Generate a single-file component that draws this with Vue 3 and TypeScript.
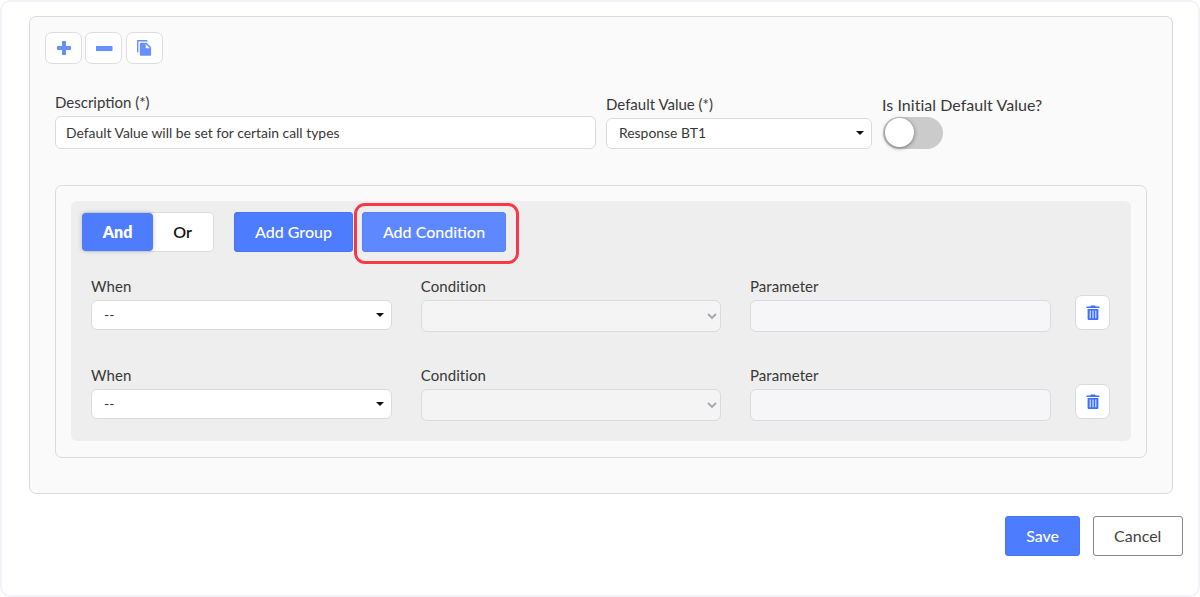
<script setup lang="ts">
import { ref } from 'vue'

interface ConditionRow {
  id: number
  when: string
}

const description = ref('Default Value will be set for certain call types')
const defaultValue = ref('Response BT1')
const isInitial = ref(false)
const operator = ref<'And' | 'Or'>('And')
const rows = ref<ConditionRow[]>([
  { id: 1, when: '--' },
  { id: 2, when: '--' },
])

let nextId = 3
function addCondition(): void {
  rows.value.push({ id: nextId++, when: '--' })
}
function removeRow(id: number): void {
  rows.value = rows.value.filter((row) => row.id !== id)
}
</script>

<template>
  <main class="page">
    <section class="panel">
      <div class="toolbar">
        <button class="tool" aria-label="Add">
          <svg width="16" height="16" viewBox="0 0 16 16"><path d="M6 1h4v5h5v4h-5v5H6v-5H1V6h5z" /></svg>
        </button>
        <button class="tool" aria-label="Remove">
          <svg width="18" height="16" viewBox="0 0 18 16"><rect x="1" y="6" width="16.5" height="5" rx="0.6" /></svg>
        </button>
        <button class="tool" aria-label="Copy">
          <svg width="16" height="18" viewBox="0 0 16 18">
            <path d="M1 1.1h10.4v1.4H2.4v10.7H1z" />
            <path fill-rule="evenodd" d="M5 3.8h5.6l4.5 4.5v7.3a1.2 1.2 0 0 1-1.2 1.2H5a1.2 1.2 0 0 1-1.2-1.2V5A1.2 1.2 0 0 1 5 3.8zm4.7 1.1v4.3h4.2z" />
          </svg>
        </button>
      </div>

      <div class="fields">
        <div class="field description">
          <label>Description (*)</label>
          <div class="control text-input">{{ description }}</div>
        </div>
        <div class="field default-value">
          <label>Default Value (*)</label>
          <div class="control select">
            <span>{{ defaultValue }}</span>
            <i class="caret"></i>
          </div>
        </div>
        <div class="field initial">
          <label>Is Initial Default Value?</label>
          <button class="switch" :class="{ on: isInitial }" aria-label="Is Initial Default Value?" @click="isInitial = !isInitial">
            <i class="knob"></i>
          </button>
        </div>
      </div>

      <div class="builder">
        <div class="group">
          <div class="actions">
            <div class="toggle">
              <button :class="{ active: operator === 'And' }" @click="operator = 'And'">And</button>
              <button :class="{ active: operator === 'Or' }" @click="operator = 'Or'">Or</button>
            </div>
            <button class="primary add-group">Add Group</button>
            <div class="highlight">
              <button class="primary add-condition" @click="addCondition">Add Condition</button>
            </div>
          </div>

          <div v-for="row in rows" :key="row.id" class="row">
            <div class="field">
              <label>When</label>
              <div class="control select when">
                <span>{{ row.when }}</span>
                <i class="caret"></i>
              </div>
            </div>
            <div class="field">
              <label>Condition</label>
              <div class="control disabled condition">
                <svg width="10" height="7" viewBox="0 0 10 7"><path d="M1 1l4 4 4-4" /></svg>
              </div>
            </div>
            <div class="field">
              <label>Parameter</label>
              <div class="control disabled parameter"></div>
            </div>
            <button class="trash" aria-label="Delete" @click="removeRow(row.id)">
              <svg width="14" height="17" viewBox="0 0 14 17">
                <path d="M0.5 2.6h3.7l.8-1.2h4l.8 1.2h3.7v1.3h-13z" />
                <path class="bin" d="M1.6 5h10.8v9.7a1.2 1.2 0 0 1-1.2 1.2H2.8a1.2 1.2 0 0 1-1.2-1.2z" />
                <path class="slots" d="M4.3 6.4v7.9M7 6.4v7.9M9.7 6.4v7.9" />
              </svg>
            </button>
          </div>
        </div>
      </div>
    </section>

    <footer class="footer">
      <button class="primary save">Save</button>
      <button class="cancel">Cancel</button>
    </footer>
  </main>
</template>

<style>
body {
  background: #fff;
}
</style>

<style scoped>
.page,
.page * {
  box-sizing: border-box;
}
.page {
  width: 1200px;
  height: 597px;
  padding: 14px 15px 0 27px;
  border: 2px solid #f2f2f8;
  border-radius: 10px;
  background: #fff;
  color: #383838;
  font-family: Lato, sans-serif;
  font-size: 15px;
  overflow: hidden;
}
button {
  margin: 0;
  padding: 0;
  font: inherit;
  cursor: pointer;
}
.panel {
  width: 1144px;
  height: 477.5px;
  padding: 15px 25px 0;
  border: 1px solid #dadbdc;
  border-radius: 7px;
  background: #fafafa;
}
.toolbar {
  display: flex;
  gap: 3.3px;
  margin-left: -10px;
}
.tool {
  display: flex;
  align-items: center;
  justify-content: center;
  width: 37px;
  height: 32px;
  border: 1px solid #dcdddd;
  border-radius: 7px;
  background: #fff;
}
.tool svg {
  fill: #6690ff;
}
.fields {
  display: flex;
  gap: 10px;
  height: 120.5px;
  padding-top: 30px;
}
.field {
  display: flex;
  flex-direction: column;
}
label {
  height: 22px;
  line-height: 16px;
  white-space: nowrap;
}
.description {
  width: 541px;
}
.default-value {
  width: 266px;
  padding-top: 2px;
}
.initial {
  padding-top: 3px;
}
.initial label {
  font-size: 16px;
  letter-spacing: 0.04px;
}
.control {
  border: 1px solid #dadbdc;
  border-radius: 6px;
  background: #fff;
  font-size: 13.9px;
}
.text-input {
  height: 33px;
  padding: 0 10px;
  line-height: 31px;
}
.select {
  display: flex;
  align-items: center;
  justify-content: space-between;
  height: 30.5px;
  padding: 0 7px 0 12px;
}
.select span {
  padding-bottom: 1.5px;
}
.caret {
  border: 4px solid transparent;
  border-top-color: #111;
  border-bottom: 0;
}
.switch {
  width: 60.5px;
  height: 32px;
  margin-top: -2px;
  margin-left: 0.5px;
  border: 0;
  border-radius: 16px;
  background: #cbcbcb;
}
.knob {
  display: block;
  width: 29px;
  height: 29px;
  margin-left: 2px;
  margin-top: -1px;
  border-radius: 50%;
  background: #fff;
  box-shadow: 0 1px 4px rgba(0, 0, 0, 0.45);
}
.switch.on {
  background: #4d7cff;
}
.switch.on .knob {
  margin-left: 30px;
}
.builder {
  height: 273px;
  padding: 15.5px 15px 0;
  border: 1px solid #dadbdc;
  border-radius: 7px;
}
.group {
  height: 240px;
  padding: 11px 20px 0;
  border-radius: 6px;
  background: #eee;
}
.actions {
  display: flex;
  height: 65px;
  margin-left: -9px;
}
.toggle {
  display: flex;
  width: 132px;
  height: 40px;
  border: 1px solid #dadbdc;
  border-radius: 4px;
  background: #fff;
}
.toggle button {
  width: 59px;
  padding-bottom: 1px;
  border: 0;
  background: none;
  color: #111;
  font-size: 16px;
  font-weight: 600;
}
.toggle button.active {
  width: 71px;
  margin-left: -1px;
  border-radius: 4px;
  background: #4d7cff;
  color: #fff;
  font-weight: 800;
  box-shadow: 0 0 5px rgba(0, 0, 0, 0.2);
}
.primary {
  height: 40px;
  padding-bottom: 2px;
  border: 1px solid #4375ff;
  border-radius: 3px;
  background: #4d7cff;
  color: #fff;
  font-size: 16px;
  font-weight: 500;
}
.add-group {
  width: 119px;
  margin-left: 20px;
}
.highlight {
  width: 165px;
  height: 61px;
  margin: -9px 0 0 1px;
  padding: 6px 0 0 5px;
  border: 3px solid #f93847;
  border-radius: 11px;
}
.add-condition {
  width: 144px;
  border-color: #5580ff;
  background: #5e88ff;
}
.row {
  display: grid;
  grid-template-columns: 301px 300.6px 301px 35px;
  column-gap: 28.7px;
  height: 89.3px;
}
.row .field {
  padding-top: 1px;
}
.row .field label {
  letter-spacing: 0.08px;
}
.row .trash {
  margin-left: -4.5px;
  margin-top: 18px;
}
.when {
  height: 30px;
}
.disabled {
  height: 32px;
  background: #f4f4f4;
}
.condition {
  display: flex;
  align-items: center;
  justify-content: flex-end;
  padding-right: 3.5px;
}
.condition svg {
  fill: none;
  stroke: #a4a8ac;
  stroke-width: 1.8;
}
.parameter {
  background: #f6f6f9;
}
.trash {
  display: flex;
  align-items: center;
  justify-content: center;
  width: 35px;
  height: 35px;
  border: 1px solid #dadbdc;
  border-radius: 7px;
  background: #fff;
}
.trash svg {
  fill: #3d70ff;
}
.trash .slots {
  stroke: #bfcfff;
  stroke-width: 1.4;
}
.footer {
  display: flex;
  justify-content: flex-end;
  gap: 12.4px;
  margin-top: 22.5px;
}
.save {
  width: 75px;
}
.cancel {
  width: 90.5px;
  height: 40px;
  padding-bottom: 2px;
  border: 1px solid #86888a;
  border-radius: 3px;
  background: #fff;
  color: #444;
  font-size: 16px;
}
</style>
